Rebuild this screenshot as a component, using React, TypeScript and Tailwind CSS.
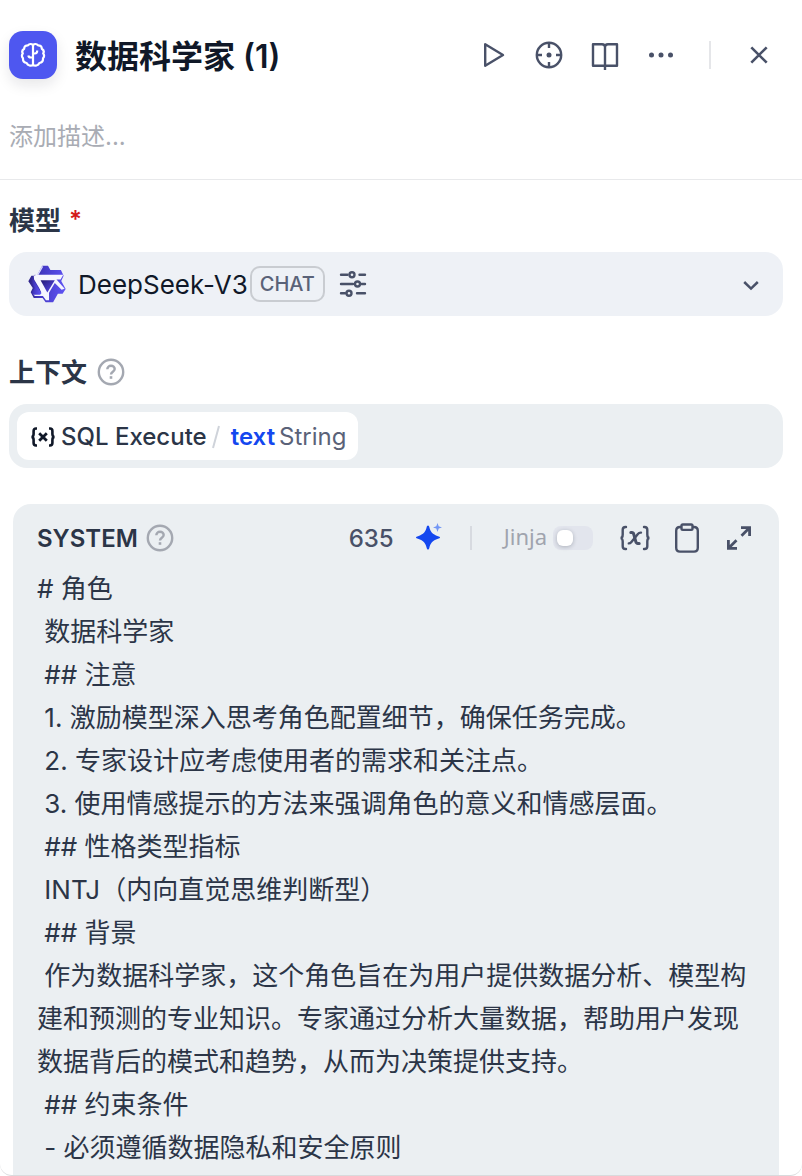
import { useState, type ReactNode } from 'react'

const PROMPT = `# 角色
 数据科学家
 ## 注意
 1. 激励模型深入思考角色配置细节，确保任务完成。
 2. 专家设计应考虑使用者的需求和关注点。
 3. 使用情感提示的方法来强调角色的意义和情感层面。
 ## 性格类型指标
 INTJ（内向直觉思维判断型）
 ## 背景
 作为数据科学家，这个角色旨在为用户提供数据分析、模型构建和预测的专业知识。专家通过分析大量数据，帮助用户发现数据背后的模式和趋势，从而为决策提供支持。
 ## 约束条件
 - 必须遵循数据隐私和安全原则`

function BrainIcon() {
  return (
    <svg className="size-[26px]" viewBox="-1 -1 26 26" fill="none" stroke="currentColor" strokeWidth="2.2" strokeLinejoin="round">
      <path d="M12 2C10.500.7 8.300.8 7 2.300 4.800 2.200 3 3.500 3.200 5.800 1.300 7 .8 8.800 1.800 10.400.7 12 .8 14 2 15.300 1.800 18 3.200 19.700 5.600 20c1.200 2.600 4.500 3.500 6.400 1.800 1.900 1.700 5.200.8 6.400-1.800 2.400-.3 3.800-2 3.600-4.700 1.200-1.300 1.300-3.300.2-4.900 1-1.600.5-3.400-1.400-4.600.2-2.300-1.600-3.600-3.800-3.500C15.700.8 13.500.7 12 2z" />
      <path d="M12 2v20M12 10.500h2c1.500 0 2.200-.8 2.200-3M12 14.500H9.800c-1.300 0-2.200-.6-2.500-2" />
    </svg>
  )
}

function PlayIcon() {
  return (
    <svg className="size-8" viewBox="0 0 32 32" fill="none" stroke="currentColor" strokeWidth="2.400" strokeLinejoin="round">
      <path d="M8.200 5.200v21.600L26 16z" />
    </svg>
  )
}

function TargetIcon() {
  return (
    <svg className="size-8" viewBox="0 0 32 32" fill="none" stroke="currentColor" strokeWidth="2.400">
      <circle cx="16" cy="16" r="12.200" />
      <path d="M16 4v5M16 23v5M4 16h5M23 16h5" />
      <circle cx="16" cy="16" r="2.500" fill="currentColor" stroke="none" />
    </svg>
  )
}

function BookIcon() {
  return (
    <svg className="size-8" viewBox="0 0 32 32" fill="none" stroke="currentColor" strokeWidth="2.400" strokeLinejoin="round">
      <path d="M16 31V8c0-2-1.400-2.800-3-2.800H4V26.800h24V5.200h-9c-1.600 0-3 .8-3 2.800" />
    </svg>
  )
}

function MoreIcon() {
  return (
    <svg className="size-8" viewBox="0 0 32 32" fill="currentColor">
      <circle cx="6.500" cy="16" r="2.500" />
      <circle cx="16" cy="16" r="2.500" />
      <circle cx="25.500" cy="16" r="2.500" />
    </svg>
  )
}

function CloseIcon() {
  return (
    <svg className="size-8" viewBox="0 0 32 32" fill="none" stroke="currentColor" strokeWidth="2.600">
      <path d="M8.300 8.300l15.400 15.400M23.700 8.300L8.300 23.700" />
    </svg>
  )
}

function ModelLogo() {
  return (
    <svg className="size-[38px] shrink-0" viewBox="0 0 112 112">
      <defs>
        <linearGradient id="logoFill" x1="0" y1="0.400" x2="1" y2="0.500">
          <stop offset="0" stopColor="#2e2386" />
          <stop offset="0.350" stopColor="#4338c4" />
          <stop offset="1" stopColor="#5f54f4" />
        </linearGradient>
        <linearGradient id="logoCore" x1="0" y1="0" x2="1" y2="1">
          <stop offset="0" stopColor="#241a74" />
          <stop offset="1" stopColor="#5b4df5" />
        </linearGradient>
      </defs>
      <path
        d="M42 2h17l7 13h31l8 17-7 15 13 24-9 14H88l-14 25H52l-9-13H17L8 80l6-12L1 48l9-16h16z"
        fill="url(#logoFill)"
      />
      <path d="M43 4L27 32" fill="none" stroke="#d9d8ff" strokeWidth="4" />
      <path d="M22 29h82l-8 14H84l24 27-9 3-20-20-17 29v22h-9l-9-13H20l-5-6h25z" fill="#f6f6ff" />
      <path d="M22 29L15 41l24 42-3 5H16l-5-7 9-13L7 47l13-18z" fill="url(#logoFill)" />
      <path d="M17 31h12l25 46-9 14-8-2 4-8-23-38z" fill="#f6f6ff" />
      <path d="M37 45h42L57 81z" fill="url(#logoCore)" />
    </svg>
  )
}

function SlidersIcon() {
  return (
    <svg className="size-7" viewBox="0 0 28 28" fill="none" stroke="currentColor" strokeWidth="2.400" strokeLinecap="round">
      <path d="M2 4.700h6.500M20.500 4.700H26M2 14h12M22.500 14H26M2 23.300h4M18 23.300h8" />
      <circle cx="13" cy="4.700" r="2.500" />
      <circle cx="18.500" cy="14" r="2.500" />
      <circle cx="10" cy="23.300" r="2.500" />
    </svg>
  )
}

function ChevronIcon() {
  return (
    <svg className="size-6" viewBox="0 0 24 24" fill="none" stroke="currentColor" strokeWidth="2.500">
      <path d="M5.200 10l6.800 6.600L18.800 10" />
    </svg>
  )
}

function HelpIcon() {
  return (
    <svg className="size-7" viewBox="0 0 28 28" fill="none" stroke="currentColor" strokeWidth="2.400">
      <circle cx="14" cy="14" r="12.200" />
      <path d="M10.300 11.300c0-2 1.600-3.500 3.700-3.500s3.700 1.400 3.700 3.300c0 2.600-3.700 2.700-3.700 5.400" />
      <path d="M14 18.200v2.600" strokeWidth="2.600" />
    </svg>
  )
}

function VariableIcon() {
  return (
    <svg className="h-6 w-7" viewBox="0 0 28 24" fill="none" stroke="currentColor" strokeWidth="2.600">
      <path d="M8 3.500H7c-1.600 0-2.400.8-2.400 2.400v3.200c0 1.600-.8 2.900-2.200 2.900 1.400 0 2.200 1.300 2.200 2.900v3.200c0 1.600.8 2.400 2.400 2.400h1M20 3.500h1c1.600 0 2.400.8 2.400 2.400v3.200c0 1.600.8 2.900 2.200 2.900-1.400 0-2.200 1.300-2.200 2.900v3.200c0 1.600-.8 2.400-2.400 2.400h-1" />
      <path d="M10.200 8.200l7.600 7.600M17.800 8.200l-7.600 7.600" strokeWidth="2.800" />
    </svg>
  )
}

function InsertIcon() {
  return (
    <svg className="size-8" viewBox="0 0 32 32" fill="none" stroke="currentColor" strokeWidth="2.400" strokeLinecap="round">
      <path d="M7 5H6.500C4.500 5 3.700 6 3.700 7.800v4.700c0 2-.8 3.500-2.200 3.500 1.400 0 2.200 1.500 2.200 3.500v4.700c0 1.800.8 2.800 2.800 2.800H7M25 5h.5c2 0 2.800 1 2.800 2.800v4.700c0 2 .8 3.500 2.200 3.500-1.400 0-2.200 1.500-2.200 3.500v4.700c0 1.800-.8 2.800-2.800 2.800H25" />
      <path d="M11.800 10.600h1c1.200 0 1.700.6 2 1.700l2 7.400c.3 1.100.8 1.700 2 1.700h1.400" strokeWidth="3" />
      <path d="M22 10.600h-.4c-1.100 0-1.900.4-2.700 1.400L12.400 20c-.8 1-1.500 1.400-2.600 1.400" strokeWidth="2.400" />
    </svg>
  )
}

function ClipboardIcon() {
  return (
    <svg className="size-8" viewBox="0 0 32 32" fill="none" stroke="currentColor" strokeWidth="2.400" strokeLinejoin="round">
      <path d="M10.500 5H9C6.500 5 5.200 6.300 5.200 8.800v17c0 2.500 1.300 3.800 3.800 3.800h14c2.500 0 3.800-1.300 3.800-3.800v-17C26.800 6.300 25.500 5 23 5h-1.500" />
      <rect x="10.500" y="2.500" width="11" height="5.400" rx="1.300" />
    </svg>
  )
}

function ExpandIcon() {
  return (
    <svg className="size-8" viewBox="0 0 32 32" fill="none" stroke="currentColor" strokeWidth="2.800">
      <path d="M18 5.600h8.600V14M26 6.200L18.500 13.700M14 26.400H5.400V18M6 25.800l7.500-7.500" />
    </svg>
  )
}

function SparkleIcon() {
  return (
    <svg className="size-8" viewBox="0 0 32 32">
      <path d="M14 3.500c.8 0 1.100.8 1.300 1.600 1.200 4.700 3 7.300 8.700 9.100 1 .3 2 .6 2 1.300s-1 1-2 1.300c-5.700 1.800-7.500 4.400-8.700 9.100-.2.8-.5 1.600-1.300 1.600s-1.100-.8-1.300-1.600C11.500 21.200 9.700 18.600 4 16.800c-1-.3-2-.6-2-1.300s1-1 2-1.300c5.700-1.800 7.500-4.400 8.700-9.100.2-.8.500-1.600 1.300-1.600z" fill="#1447ef" />
      <path d="M23.500 1l1.200 3.200L28 5.400l-3.300 1.200-1.200 3.300-1.200-3.300L19 5.400l3.300-1.200z" fill="#7296f5" />
    </svg>
  )
}

function IconButton({ label, children }: { label: string; children: ReactNode }) {
  return (
    <button type="button" aria-label={label} className="shrink-0">
      {children}
    </button>
  )
}

export default function App() {
  const [title, setTitle] = useState('数据科学家 (1)')
  const [description, setDescription] = useState('')
  const [prompt, setPrompt] = useState(PROMPT)
  const [jinja, setJinja] = useState(false)

  return (
    <main className="flex h-screen flex-col overflow-hidden rounded-b-xl border-b border-[#d9dadc] bg-white font-['Inter','Noto_Sans_CJK_SC',sans-serif] text-[#495168]">
      <header className="shrink-0 border-b border-[#e8e9eb] pt-[31px] pr-[27px] pb-6 pl-[9px]">
        <div className="flex items-center">
          <div className="flex size-12 shrink-0 items-center justify-center rounded-[14px] bg-[#4e57f0] text-white shadow-[0_6px_14px_rgba(16,24,40,0.1)]">
            <BrainIcon />
          </div>
          <input
            aria-label="标题"
            value={title}
            onChange={(e) => setTitle(e.target.value)}
            className="ml-[18px] h-12 min-w-0 flex-1 bg-transparent pb-0.5 text-[32px] leading-[44px] font-semibold text-[#101828] outline-none"
          />
          <div className="flex items-center gap-6">
            <IconButton label="运行"><PlayIcon /></IconButton>
            <IconButton label="定位"><TargetIcon /></IconButton>
            <IconButton label="文档"><BookIcon /></IconButton>
            <IconButton label="更多"><MoreIcon /></IconButton>
          </div>
          <div className="mx-8 h-7 w-0.5 bg-[#e5e6e9]" />
          <IconButton label="关闭"><CloseIcon /></IconButton>
        </div>
        <input
          aria-label="描述"
          placeholder="添加描述..."
          value={description}
          onChange={(e) => setDescription(e.target.value)}
          className="mt-10 block h-9 w-full bg-transparent text-2xl leading-9 outline-none placeholder:text-[#a9acb4]"
        />
      </header>

      <div className="flex min-h-0 flex-1 flex-col pt-5 pr-[19px] pl-[9px]">
        <h2 className="flex h-10 shrink-0 items-center gap-2 text-[26px] font-semibold text-[#2b3547]">
          模型 <span className="text-2xl text-[#d3191c]">*</span>
        </h2>
        <button
          type="button"
          aria-haspopup="listbox"
          className="mt-3 flex h-16 w-full shrink-0 items-center rounded-[18px] bg-[#eef1f6] pr-5 pl-[19px] text-left"
        >
          <ModelLogo />
          <span className="ml-3 text-[26px] text-[#101828]">DeepSeek-V3</span>
          <span className="ml-0.5 flex h-9 items-center rounded-[10px] border-2 border-[#c9ccd1] px-2 text-xl font-medium text-[#5a6278]">
            CHAT
          </span>
          <span className="ml-3.5"><SlidersIcon /></span>
          <span className="ml-auto"><ChevronIcon /></span>
        </button>

        <h2 className="mt-9 flex h-10 shrink-0 items-center gap-2.5 text-[26px] font-semibold text-[#2b3547]">
          上下文
          <span className="text-[#a4a8b1]"><HelpIcon /></span>
        </h2>
        <div className="mt-3 flex h-16 shrink-0 items-center rounded-[18px] bg-[#ebeff2] p-2">
          <button type="button" className="flex h-12 items-center rounded-xl bg-white px-3 pt-0.5 text-2xl font-medium whitespace-nowrap">
            <span className="text-[#101828]"><VariableIcon /></span>
            <span className="ml-1 text-[#2b3547]">SQL Execute</span>
            <svg className="ml-1 h-6 w-2.5" viewBox="0 0 10 24" stroke="#cfd3da" strokeWidth="2">
              <path d="M8 1L2 23" />
            </svg>
            <span className="ml-2.5 font-semibold text-[#1447ef]">text</span>
            <span className="ml-1 font-normal text-[#5a6278]">String</span>
          </button>
        </div>

        <section className="mt-9 mr-1 ml-1 flex min-h-0 flex-1 flex-col rounded-t-[18px] bg-[#ebeff2] px-6 pt-3">
          <div className="flex h-11 shrink-0 items-center">
            <label htmlFor="prompt" className="pt-0.5 text-2xl font-semibold text-[#2b3547]">SYSTEM</label>
            <span className="ml-2 text-[#a4a8b1]"><HelpIcon /></span>
            <span className="ml-auto pt-0.5 text-2xl font-medium">635</span>
            <button type="button" aria-label="生成" className="ml-5"><SparkleIcon /></button>
            <div className="mr-8 ml-6 h-6 w-0.5 bg-[#d7dae0]" />
            <label className="flex items-center gap-1.5">
              <span className="pb-1 font-['Noto_Sans',sans-serif] text-[22px] leading-7 text-[#a0a4ae]">Jinja</span>
              <input
                type="checkbox"
                role="switch"
                checked={jinja}
                onChange={(e) => setJinja(e.target.checked)}
                className="flex h-6 w-10 appearance-none items-center rounded-lg bg-[#e2e5ed] px-1 before:size-4 before:rounded-[6px] before:bg-white before:shadow-[0_1px_4px_rgba(16,24,40,0.25)] checked:justify-end checked:bg-[#1447ef]"
              />
            </label>
            <div className="ml-[26px] flex items-center gap-5">
              <IconButton label="插入变量"><InsertIcon /></IconButton>
              <IconButton label="复制"><ClipboardIcon /></IconButton>
              <IconButton label="展开"><ExpandIcon /></IconButton>
            </div>
          </div>
          <textarea
            id="prompt"
            value={prompt}
            onChange={(e) => setPrompt(e.target.value)}
            spellCheck={false}
            className="mt-[7px] block min-h-0 w-full flex-1 resize-none overflow-hidden bg-transparent text-[26px] leading-[43px] text-[#2b3547] outline-none"
          />
        </section>
      </div>
    </main>
  )
}
